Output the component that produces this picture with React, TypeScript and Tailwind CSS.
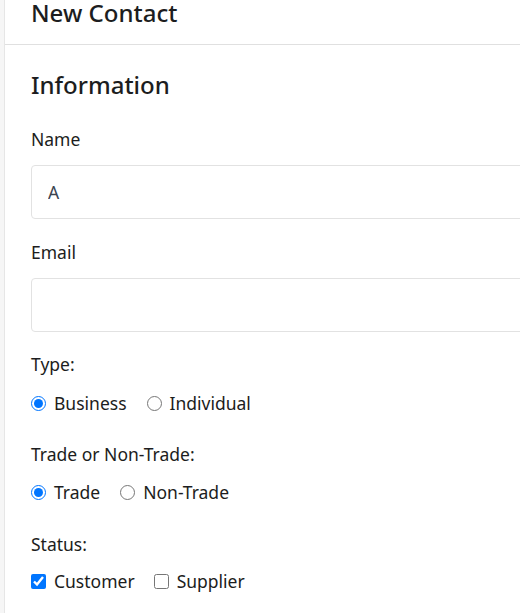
import React from "react";

function Choice({
  type,
  name,
  label,
  checked,
}: {
  type: "radio" | "checkbox";
  name: string;
  label: string;
  checked?: boolean;
}) {
  return (
    <label className="flex items-center gap-[8px]">
      <input
        type={type}
        name={name}
        defaultChecked={checked}
        className="w-[15px] h-[15px] m-0"
      />
      <span>{label}</span>
    </label>
  );
}

export default function App() {
  return (
    <div
      className="flex w-[520px] h-[613px] overflow-hidden bg-white text-[#1c1d20]"
      style={{ fontFamily: '"Noto Sans", sans-serif' }}
    >
      {/* Left rail */}
      <div className="w-[5px] shrink-0 bg-[#f6f6f6] border-r border-[#e6e6e6]" />

      <div className="flex-1 min-w-0">
        {/* Header */}
        <div className="h-[45px] border-b border-[#e0e0e0] pl-[26px]">
          <h1 className="text-[24px] leading-[26px] font-medium">
            New Contact
          </h1>
        </div>

        <div className="pl-[26px] text-[17.5px] leading-[24px]">
          <h2 className="mt-[25px] text-[24px] leading-[29px] font-medium">
            Information
          </h2>

          {/* Name */}
          <div className="mt-[28px]">Name</div>
          <input
            defaultValue="A"
            className="mt-[14px] block w-[560px] h-[54px] rounded-[4px] border border-[#e2e2e2] px-[16px] text-[17.5px] text-[#3b4450] outline-none"
          />

          {/* Email */}
          <div className="mt-[21px]">Email</div>
          <input className="mt-[14px] block w-[560px] h-[54px] rounded-[4px] border border-[#e2e2e2] px-[16px] text-[17.5px] outline-none" />

          {/* Type */}
          <div className="mt-[20px]">Type:</div>
          <div className="mt-[15px] flex gap-[20px]">
            <Choice type="radio" name="type" label="Business" checked />
            <Choice type="radio" name="type" label="Individual" />
          </div>

          {/* Trade */}
          <div className="mt-[27px]">Trade or Non-Trade:</div>
          <div className="mt-[14px] flex gap-[20px]">
            <Choice type="radio" name="trade" label="Trade" checked />
            <Choice type="radio" name="trade" label="Non-Trade" />
          </div>

          {/* Status */}
          <div className="mt-[28px]">Status:</div>
          <div className="mt-[13px] flex gap-[19px]">
            <Choice type="checkbox" name="customer" label="Customer" checked />
            <Choice type="checkbox" name="supplier" label="Supplier" />
          </div>
        </div>
      </div>
    </div>
  );
}
